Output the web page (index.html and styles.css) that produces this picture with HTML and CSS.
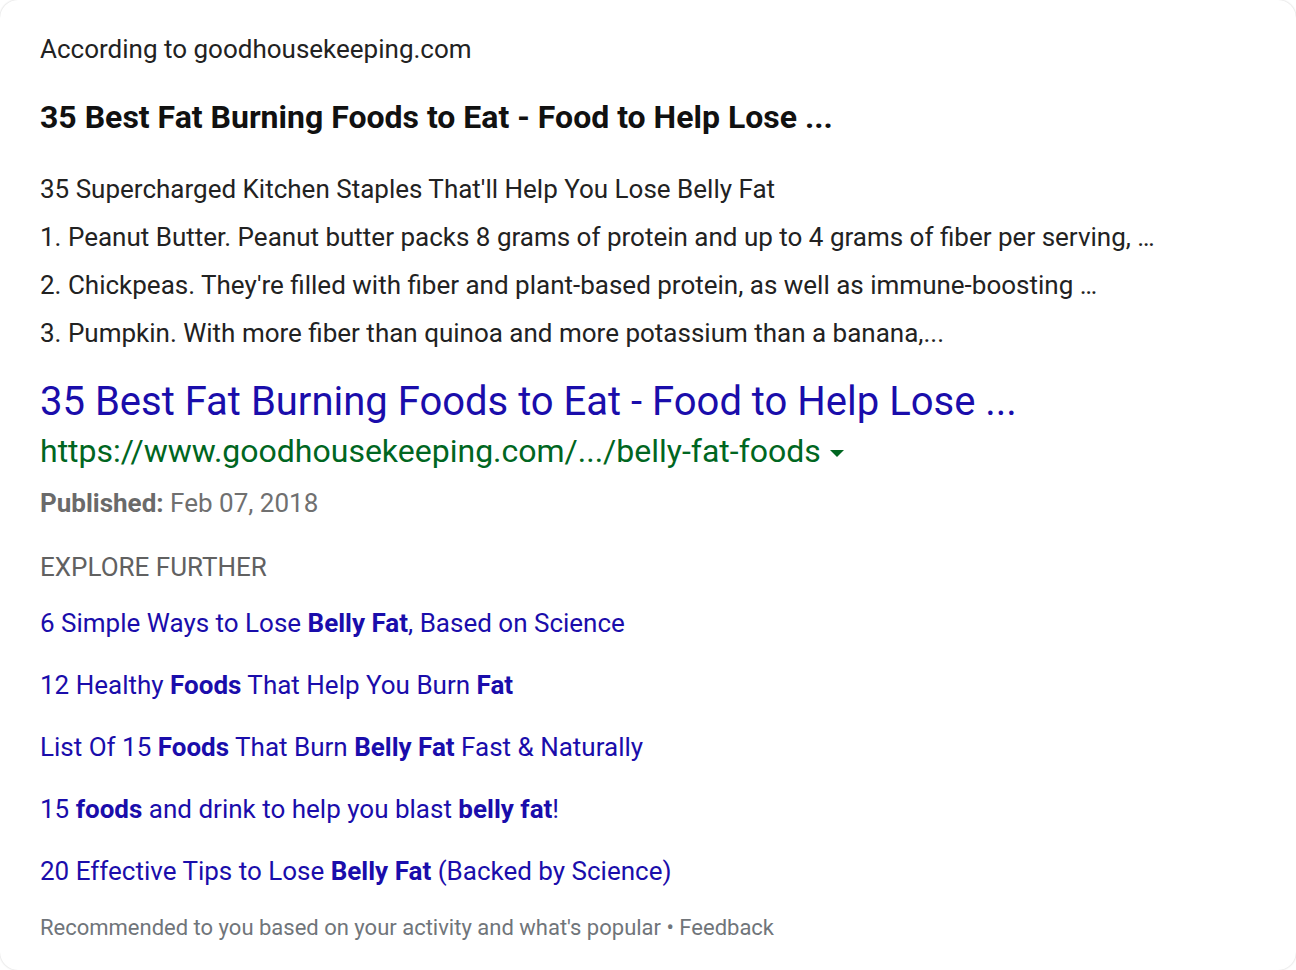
FILE: index.html
```html
<!DOCTYPE html>
<html>
<head>
<meta charset="utf-8">
<link rel="stylesheet" href="styles.css">
</head>
<body>
<div class="card">
  <div class="source">According to goodhousekeeping.com</div>
  <div class="snippet-title">35 Best Fat Burning Foods to Eat - Food to Help Lose ...</div>
  <ul class="snippet">
    <li>35 Supercharged Kitchen Staples That'll Help You Lose Belly Fat</li>
    <li>1. Peanut Butter. Peanut butter packs 8 grams of protein and up to 4 grams of fiber per serving, …</li>
    <li>2. Chickpeas. They're filled with fiber and plant-based protein, as well as immune-boosting …</li>
    <li>3. Pumpkin. With more fiber than quinoa and more potassium than a banana,...</li>
  </ul>
  <a class="result-title" href="#">35 Best Fat Burning Foods to Eat - Food to Help Lose ...</a>
  <div class="url">https://www.goodhousekeeping.com/.../belly-fat-foods <span class="caret"></span></div>
  <div class="published"><b>Published:</b> Feb 07, 2018</div>
  <div class="explore">EXPLORE FURTHER</div>
  <ul class="links">
    <li><a href="#">6 Simple Ways to Lose <b>Belly Fat</b>, Based on Science</a></li>
    <li><a href="#">12 Healthy <b>Foods</b> That Help You Burn <b>Fat</b></a></li>
    <li><a href="#">List Of 15 <b>Foods</b> That Burn <b>Belly Fat</b> Fast &amp; Naturally</a></li>
    <li><a href="#">15 <b>foods</b> and drink to help you blast <b>belly fat</b>!</a></li>
    <li><a href="#">20 Effective Tips to Lose <b>Belly Fat</b> (Backed by Science)</a></li>
  </ul>
  <div class="footer">Recommended to you based on your activity and what's popular • Feedback</div>
</div>
</body>
</html>
```
FILE: styles.css
```css
html, body {
  margin: 0;
  padding: 0;
  background: #ffffff;
}
body {
  font-family: Roboto, "Liberation Sans", Arial, sans-serif;
  color: #222222;
}
.card {
  box-sizing: border-box;
  width: 1296px;
  height: 970px;
  background: #ffffff;
  border-radius: 18px;
  box-shadow: 0 0 2px rgba(0, 0, 0, 0.22);
  padding: 33px 40px 0 40px;
  display: flex;
  flex-direction: column;
  align-items: flex-start;
}
.source {
  font-size: 26px;
  line-height: 32px;
  color: #222;
}
.snippet-title {
  margin-top: 34px;
  font-size: 32px;
  line-height: 36px;
  font-weight: bold;
  color: #111;
}
.snippet {
  list-style: none;
  margin: 30px 0 0 0;
  padding: 0;
  font-size: 26px;
  line-height: 48px;
  color: #222;
}
.result-title {
  margin-top: 21px;
  font-size: 40px;
  line-height: 48px;
  color: #1a0dab;
  text-decoration: none;
}
.url {
  font-size: 32px;
  line-height: 50px;
  color: #006621;
  display: flex;
  align-items: center;
  gap: 9px;
}
.caret {
  width: 0;
  height: 0;
  border-left: 7px solid transparent;
  border-right: 7px solid transparent;
  border-top: 7px solid #006621;
  margin-top: 4px;
}
.published {
  margin-top: 11px;
  font-size: 26px;
  line-height: 32px;
  color: #707070;
}
.published b {
  color: #6a6a6a;
}
.explore {
  margin-top: 32px;
  font-size: 26px;
  line-height: 32px;
  color: #616161;
}
.links {
  list-style: none;
  margin: 9px 0 0 0;
  padding: 0;
  font-size: 26px;
  line-height: 62px;
}
.links a {
  color: #1a0dab;
  text-decoration: none;
}
.footer {
  margin-top: 12px;
  font-size: 22px;
  line-height: 28px;
  color: #70757a;
}
```
